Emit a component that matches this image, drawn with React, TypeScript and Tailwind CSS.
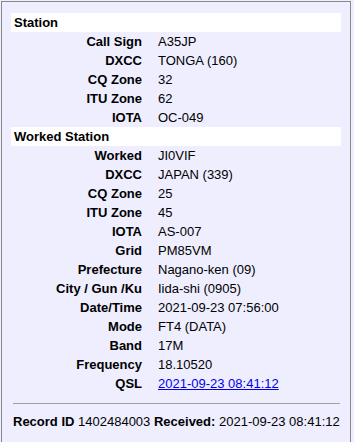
type Row = { label: string; value: string; link?: boolean };

const station: Row[] = [
  { label: "Call Sign", value: "A35JP" },
  { label: "DXCC", value: "TONGA (160)" },
  { label: "CQ Zone", value: "32" },
  { label: "ITU Zone", value: "62" },
  { label: "IOTA", value: "OC-049" },
];

const worked: Row[] = [
  { label: "Worked", value: "JI0VIF" },
  { label: "DXCC", value: "JAPAN (339)" },
  { label: "CQ Zone", value: "25" },
  { label: "ITU Zone", value: "45" },
  { label: "IOTA", value: "AS-007" },
  { label: "Grid", value: "PM85VM" },
  { label: "Prefecture", value: "Nagano-ken (09)" },
  { label: "City / Gun /Ku", value: "Iida-shi (0905)" },
  { label: "Date/Time", value: "2021-09-23 07:56:00" },
  { label: "Mode", value: "FT4 (DATA)" },
  { label: "Band", value: "17M" },
  { label: "Frequency", value: "18.10520" },
  { label: "QSL", value: "2021-09-23 08:41:12", link: true },
];

function Header({ title }: { title: string }) {
  return (
    <div className="h-[19px] bg-white pl-[3px] font-bold leading-[19px]">
      {title}
    </div>
  );
}

function Rows({ rows }: { rows: Row[] }) {
  return (
    <>
      {rows.map((r, i) => (
        <div key={i} className="flex h-[19px] leading-[19px]">
          <div className="w-[131px] shrink-0 text-right font-bold">{r.label}</div>
          <div className="ml-[16px] whitespace-nowrap">
            {r.link ? (
              <a href="#" className="text-[#0000ee] underline">
                {r.value}
              </a>
            ) : (
              r.value
            )}
          </div>
        </div>
      ))}
    </>
  );
}

export default function App() {
  return (
    <div
      className="h-[442px] overflow-hidden bg-[#eeeeff] p-[1px] text-[13px] text-black"
      style={{ fontFamily: '"Liberation Sans", Arial, sans-serif' }}
    >
      <div className="h-[460px] w-[350px] border border-[#888888] bg-[#eeeeff] px-[9px] pt-[11px]">
        <Header title="Station" />
        <Rows rows={station} />
        <Header title="Worked Station" />
        <Rows rows={worked} />
        <div className="mx-[2px] mt-[10px] mr-[1px] border-t border-[#a0a0a0]" />
        <div className="mt-[8px] h-[19px] whitespace-nowrap pl-[2px] leading-[19px]">
          <span className="font-bold">Record ID</span> 1402484003{" "}
          <span className="font-bold">Received:</span> 2021-09-23 08:41:12
        </div>
      </div>
    </div>
  );
}
